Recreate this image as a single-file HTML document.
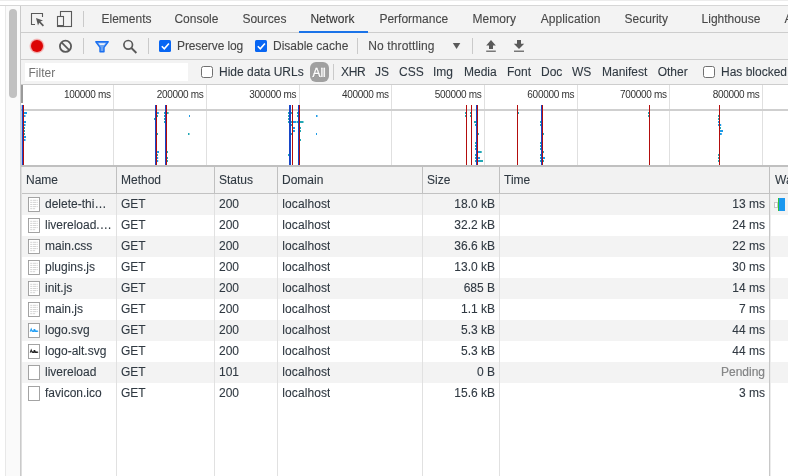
<!DOCTYPE html>
<html><head><meta charset="utf-8">
<style>
*{box-sizing:border-box;margin:0;padding:0}
html,body{width:788px;height:476px;overflow:hidden;background:#fff}
body{font-family:"Liberation Sans",sans-serif;font-size:12px;color:#303942;position:relative}
.abs{position:absolute}
.t{position:absolute;white-space:nowrap;line-height:14px;height:14px}
#topline{left:0;top:0;width:788px;height:1px;background:#ececec}
#topborder{left:0;top:5px;width:788px;height:1px;background:#d6d6d6}
#gutter{left:5px;top:6px;width:15px;height:470px;background:#fafafa;border-left:1px solid #e8e8e8}
#thumb{left:9px;top:9px;width:8px;height:89px;border-radius:4px;background:#c1c1c1}
#gline{left:20px;top:6px;width:1px;height:470px;background:#cacaca}
#tabbar{left:21px;top:6px;width:767px;height:27px;background:#f3f3f3;border-bottom:1px solid #cdcdcd}
#toolbar{left:21px;top:33px;width:767px;height:27px;background:#f3f3f3;border-bottom:1px solid #cdcdcd}
#filterbar{left:21px;top:60px;width:767px;height:25px;background:#f3f3f3;border-bottom:1px solid #cdcdcd}
.tab{top:12px;color:#474747;-webkit-text-stroke:0.1px #474747}
.sep{position:absolute;width:1px;background:#cacaca}
.tb{top:39px;color:#474747;-webkit-text-stroke:0.1px #474747}
.fb{top:65px;color:#303942;-webkit-text-stroke:0.1px #303942}
.cb{position:absolute;width:12px;height:12px;border-radius:1.5px}
.cb.on{background:#0866f3}
.cb.off{background:#fff;border:1px solid #707070;border-radius:2.5px}
#ov{left:21px;top:85px;width:767px;height:82px;background:#fff}
.gl{position:absolute;top:85px;width:1px;height:81px;background:#e0e0e0}
.tl{position:absolute;top:89px;font-size:10px;letter-spacing:-0.3px;line-height:12px;color:#333;text-align:right;width:80px;white-space:nowrap}
#ovh{left:21px;top:109px;width:767px;height:2px;background:#cfcfcf}
#ovb{left:21px;top:165px;width:767px;height:2px;background:#c0c0c0}
#thead{left:21px;top:167px;width:767px;height:27px;background:#f2f2f2;border-bottom:1px solid #c2c2c2}
.th{position:absolute;top:173px;line-height:14px;color:#303942;white-space:nowrap;-webkit-text-stroke:0.1px #303942}
.row{position:absolute;left:21px;width:767px;height:21px}
.row.odd{background:#f3f3f3}
.c{position:absolute;top:0;line-height:21px;height:21px;white-space:nowrap;color:#303942;overflow:hidden;-webkit-text-stroke:0.1px #303942}
.c.name{left:24px;width:67px;text-overflow:ellipsis}
.c.method{left:100px}
.c.status{left:198px}
.c.domain{left:261.3px;letter-spacing:0.08px}
.c.size{left:402px;width:72px;text-align:right}
.c.time{left:480px;width:264px;text-align:right}
.vl{position:absolute;width:1px}
.vl.h{top:167px;height:26px;background:#c0c0c0}
.vl.b{top:194px;height:282px;background:#e1e1e1}
.ic{position:absolute;left:7px;top:3px;width:12px;height:15px}
#wrap{position:absolute;left:0;top:0;width:788px;height:476px;will-change:transform}
</style></head><body><div id="wrap">
<div class="abs" id="topline"></div>
<div class="abs" id="topborder"></div>
<div class="abs" id="gutter"></div>
<div class="abs" id="thumb"></div>
<div class="abs" id="gline"></div>

<div class="abs" id="tabbar"></div>
<div class="abs" id="toolbar"></div>
<div class="abs" id="filterbar"></div>

<!-- tab bar -->
<div class="sep" style="left:83px;top:11px;height:16px"></div>
<div class="t tab" style="left:101.5px">Elements</div>
<div class="t tab" style="left:174.4px">Console</div>
<div class="t tab" style="left:242.4px">Sources</div>
<div class="t tab" style="left:310.4px;color:#333">Network</div>
<div class="abs" style="left:299px;top:31px;width:69px;height:2px;background:#1a73e8"></div>
<div class="t tab" style="left:379.4px">Performance</div>
<div class="t tab" style="left:472.6px">Memory</div>
<div class="t tab" style="left:540.7px;letter-spacing:0.1px">Application</div>
<div class="t tab" style="left:624.6px">Security</div>
<div class="t tab" style="left:701.6px">Lighthouse</div>
<div class="t tab" style="left:784.6px">A</div>

<!-- toolbar -->
<div class="sep" style="left:83px;top:38px;height:16px"></div>
<div class="sep" style="left:148px;top:38px;height:16px"></div>
<div class="cb on" style="left:159px;top:40px"></div>
<div class="t tb" style="left:177px;letter-spacing:-0.1px">Preserve log</div>
<div class="cb on" style="left:255px;top:40px"></div>
<div class="t tb" style="left:273px">Disable cache</div>
<div class="sep" style="left:357px;top:38px;height:16px"></div>
<div class="t tb" style="left:368.2px;letter-spacing:0.13px">No throttling</div>
<div class="sep" style="left:472px;top:38px;height:16px"></div>

<!-- filter bar -->
<div class="abs" style="left:25px;top:63px;width:163px;height:18px;background:#fff"></div>
<div class="t" style="top:66px;left:28.5px;color:#737373">Filter</div>
<div class="cb off" style="left:201px;top:66px"></div>
<div class="t fb" style="left:219px">Hide data URLs</div>
<div class="abs" style="left:310px;top:62px;width:19px;height:20px;border-radius:6px;background:#a0a0a0"></div>
<div class="t fb" style="left:312.4px;top:65.6px;color:#fff;-webkit-text-stroke:0.35px #fff;text-shadow:0 1px 0 rgba(0,0,0,0.35)">All</div>
<div class="sep" style="left:333px;top:64px;height:16px"></div>
<div class="t fb" style="left:341px;letter-spacing:-0.3px">XHR</div>
<div class="t fb" style="left:375px">JS</div>
<div class="t fb" style="left:399px">CSS</div>
<div class="t fb" style="left:433px">Img</div>
<div class="t fb" style="left:464px">Media</div>
<div class="t fb" style="left:507px">Font</div>
<div class="t fb" style="left:541px">Doc</div>
<div class="t fb" style="left:572px">WS</div>
<div class="t fb" style="left:602px">Manifest</div>
<div class="t fb" style="left:657.7px">Other</div>
<div class="cb off" style="left:703px;top:66px"></div>
<div class="t fb" style="left:721px">Has blocked cookies</div>

<!--ICONS-->
<svg class="abs" style="left:0;top:0" width="788" height="85" viewBox="0 0 788 85">
<!-- inspect -->
<path d="M35 24.5h-3.5v-11h11v3.5" fill="none" stroke="#5a5a5a" stroke-width="1.1"/>
<path d="M36 18l7 2.4-2.6 1.2 3.6 3.6-1.2 1.2-3.6-3.6-1.2 2.6z" fill="#5a5a5a"/>
<!-- device -->
<rect x="60.5" y="11.5" width="11" height="15" fill="none" stroke="#5a5a5a" stroke-width="1.1"/>
<rect x="57.5" y="16.5" width="6" height="10" fill="#f3f3f3" stroke="#5a5a5a" stroke-width="1.1"/>
<path d="M57.5 25.7h6" stroke="#5a5a5a" stroke-width="1.4"/>
<!-- record -->
<circle cx="37" cy="46" r="7.6" fill="#f3a0a0" opacity="0.55"/>
<circle cx="37" cy="46" r="6.8" fill="#f08080" opacity="0.6"/>
<circle cx="37" cy="46" r="6" fill="#dc0505"/>
<!-- clear -->
<circle cx="65.5" cy="46.3" r="5.6" fill="none" stroke="#5a5a5a" stroke-width="1.8"/>
<path d="M61.5 42.3l8 8" stroke="#5a5a5a" stroke-width="1.8"/>
<!-- filter -->
<path d="M95.8 41.8h12.4l-4.2 5.6v4.4h-4v-4.4z" fill="#6ea5f2" stroke="#1a6ff0" stroke-width="1.4" stroke-linejoin="round"/>
<path d="M98.5 43.2h7l-1.3 1.7h-4.4z" fill="#e9f0fb"/>
<!-- search -->
<circle cx="128.2" cy="44.8" r="4.3" fill="none" stroke="#5a5a5a" stroke-width="1.7"/>
<path d="M131.4 48l5 5" stroke="#5a5a5a" stroke-width="1.8"/>
<!-- checkmarks -->
<path d="M161.8 46.3l2.5 2.5 4.6-5.4" fill="none" stroke="#fff" stroke-width="1.6"/>
<path d="M257.8 46.3l2.5 2.5 4.6-5.4" fill="none" stroke="#fff" stroke-width="1.6"/>
<!-- dropdown arrow -->
<path d="M452.8 43h7.5l-3.75 6z" fill="#5a5a5a"/>
<!-- upload -->
<path d="M491 40l4.8 5.6h-2.8v3.4h-4v-3.4h-2.8z" fill="#5a5a5a"/>
<rect x="486.2" y="50.6" width="9.6" height="1.2" fill="#5a5a5a"/>
<!-- download -->
<path d="M517 40h4v3.8h3.2l-5.2 5.2-5.2-5.2h3.2z" fill="#5a5a5a"/>
<rect x="514" y="50.6" width="10" height="1.2" fill="#5a5a5a"/>
</svg>
<!--/ICONS-->
<!-- overview -->
<div class="abs" id="ov"></div>
<div class="gl" style="left:113.20px"></div>
<div class="tl" style="left:30.80px">100000 ms</div>
<div class="gl" style="left:205.87px"></div>
<div class="tl" style="left:123.47px">200000 ms</div>
<div class="gl" style="left:298.54px"></div>
<div class="tl" style="left:216.14px">300000 ms</div>
<div class="gl" style="left:391.21px"></div>
<div class="tl" style="left:308.81px">400000 ms</div>
<div class="gl" style="left:483.88px"></div>
<div class="tl" style="left:401.48px">500000 ms</div>
<div class="gl" style="left:576.55px"></div>
<div class="tl" style="left:494.15px">600000 ms</div>
<div class="gl" style="left:669.22px"></div>
<div class="tl" style="left:586.82px">700000 ms</div>
<div class="gl" style="left:761.89px"></div>
<div class="tl" style="left:679.49px">800000 ms</div>
<div class="abs" id="ovh"></div>
<!--OVERVIEW-MARKS-->
<svg class="abs" style="left:0;top:85px" width="788" height="82" viewBox="0 85 788 82" shape-rendering="auto">
<rect x="21" y="85" width="2" height="18" fill="#9a9a9a"/>
<rect x="24" y="112" width="3" height="2" fill="#1e9be6"/>
<rect x="24" y="115" width="1.5" height="2" fill="#1e9be6"/>
<rect x="24" y="121" width="2" height="2" fill="#1e9be6"/>
<rect x="24" y="124" width="1.5" height="2" fill="#1e9be6"/>
<rect x="24" y="127" width="1" height="2" fill="#22a7b4"/>
<rect x="24" y="130" width="1" height="2" fill="#22a7b4"/>
<rect x="24" y="133" width="1" height="2" fill="#22a7b4"/>
<rect x="24" y="136" width="2" height="2" fill="#1e9be6"/>
<rect x="24" y="139" width="1.5" height="2" fill="#1e9be6"/>
<rect x="157" y="112" width="1.8" height="2" fill="#1e9be6"/>
<rect x="157" y="115" width="1" height="2" fill="#22a7b4"/>
<rect x="154" y="118" width="1" height="2" fill="#22a7b4"/>
<rect x="157" y="133" width="1" height="2" fill="#22a7b4"/>
<rect x="157" y="151" width="2" height="2" fill="#1e9be6"/>
<rect x="157" y="154" width="1" height="2" fill="#22a7b4"/>
<rect x="157" y="157" width="1.2" height="2" fill="#1e9be6"/>
<rect x="157" y="160" width="1.2" height="2" fill="#1e9be6"/>
<rect x="164" y="112" width="1.2" height="2" fill="#22a7b4"/>
<rect x="167" y="112" width="1.6" height="2" fill="#22a7b4"/>
<rect x="164" y="115" width="1.2" height="2" fill="#22a7b4"/>
<rect x="164" y="118" width="1.2" height="2" fill="#22a7b4"/>
<rect x="164" y="121" width="1" height="2" fill="#22a7b4"/>
<rect x="167" y="151" width="1" height="2" fill="#22a7b4"/>
<rect x="167" y="157" width="1" height="2" fill="#22a7b4"/>
<rect x="167" y="160" width="1" height="2" fill="#22a7b4"/>
<rect x="189" y="115" width="1" height="2" fill="#1e9be6"/>
<rect x="188" y="133" width="1.5" height="2" fill="#22a7b4"/>
<rect x="288" y="112" width="1.2" height="2" fill="#22a7b4"/>
<rect x="288" y="115" width="1.2" height="2" fill="#22a7b4"/>
<rect x="288" y="118" width="1.2" height="2" fill="#22a7b4"/>
<rect x="288" y="154" width="1" height="2" fill="#22a7b4"/>
<rect x="291" y="112" width="1" height="2" fill="#22a7b4"/>
<rect x="288" y="121" width="8.5" height="2" fill="#22a7b4"/>
<rect x="293" y="121" width="3" height="2" fill="#1e9be6"/>
<rect x="291" y="124" width="1" height="2" fill="#22a7b4"/>
<rect x="293" y="127" width="2" height="2" fill="#1e9be6"/>
<rect x="293" y="130" width="2" height="2" fill="#1e9be6"/>
<rect x="291" y="133" width="1" height="2" fill="#22a7b4"/>
<rect x="297" y="112" width="1.2" height="2" fill="#22a7b4"/>
<rect x="297" y="115" width="1.2" height="2" fill="#22a7b4"/>
<rect x="297" y="121" width="6.5" height="2" fill="#22a7b4"/>
<rect x="300" y="127" width="1" height="2" fill="#22a7b4"/>
<rect x="300" y="130" width="1" height="2" fill="#22a7b4"/>
<rect x="300" y="139" width="1" height="2" fill="#22a7b4"/>
<rect x="316" y="115" width="1.5" height="2" fill="#1e9be6"/>
<rect x="316" y="133" width="1" height="2" fill="#1e9be6"/>
<rect x="465" y="112" width="1.2" height="2" fill="#22a7b4"/>
<rect x="465" y="115" width="1.2" height="2" fill="#22a7b4"/>
<rect x="470" y="112" width="1.2" height="2" fill="#22a7b4"/>
<rect x="470" y="115" width="1.2" height="2" fill="#22a7b4"/>
<rect x="474" y="121" width="2" height="2" fill="#22a7b4"/>
<rect x="475" y="124" width="1" height="2" fill="#22a7b4"/>
<rect x="478" y="133" width="1" height="2" fill="#22a7b4"/>
<rect x="475" y="142" width="1" height="2" fill="#22a7b4"/>
<rect x="475" y="145" width="1" height="2" fill="#22a7b4"/>
<rect x="475" y="148" width="1" height="2" fill="#22a7b4"/>
<rect x="478" y="151" width="3.7" height="2" fill="#22a7b4"/>
<rect x="478" y="151" width="1.5" height="2" fill="#1e9be6"/>
<rect x="475" y="154" width="1" height="2" fill="#22a7b4"/>
<rect x="478" y="157" width="2" height="2" fill="#1e9be6"/>
<rect x="475" y="157" width="1" height="2" fill="#22a7b4"/>
<rect x="475" y="160" width="8" height="2" fill="#22a7b4"/>
<rect x="478" y="160" width="2" height="2" fill="#1e9be6"/>
<rect x="518" y="112" width="1" height="2" fill="#22a7b4"/>
<rect x="540" y="121" width="1.2" height="2" fill="#22a7b4"/>
<rect x="540" y="124" width="1.2" height="2" fill="#22a7b4"/>
<rect x="543" y="133" width="1" height="2" fill="#22a7b4"/>
<rect x="540" y="142" width="1.2" height="2" fill="#22a7b4"/>
<rect x="540" y="145" width="1.2" height="2" fill="#22a7b4"/>
<rect x="540" y="148" width="1.2" height="2" fill="#22a7b4"/>
<rect x="543" y="151" width="1" height="2" fill="#22a7b4"/>
<rect x="540" y="154" width="1.2" height="2" fill="#22a7b4"/>
<rect x="543" y="157" width="2" height="2" fill="#1e9be6"/>
<rect x="540" y="157" width="1.2" height="2" fill="#22a7b4"/>
<rect x="540" y="160" width="1.2" height="2" fill="#22a7b4"/>
<rect x="543" y="160" width="1" height="2" fill="#22a7b4"/>
<rect x="648" y="112" width="1.2" height="2" fill="#22a7b4"/>
<rect x="648" y="115" width="1.2" height="2" fill="#22a7b4"/>
<rect x="718" y="115" width="1.2" height="2" fill="#22a7b4"/>
<rect x="718" y="118" width="1.2" height="2" fill="#22a7b4"/>
<rect x="718" y="121" width="1.2" height="2" fill="#1e9be6"/>
<rect x="718" y="124" width="1.2" height="2" fill="#1e9be6"/>
<rect x="720" y="124" width="1.2" height="2" fill="#1e9be6"/>
<rect x="720" y="127" width="1" height="2" fill="#22a7b4"/>
<rect x="720" y="130" width="3" height="2" fill="#1e9be6"/>
<rect x="720" y="133" width="1.8" height="2" fill="#1e9be6"/>
<rect x="718" y="154" width="1.2" height="2" fill="#22a7b4"/>
<rect x="718" y="157" width="1.2" height="2" fill="#22a7b4"/>
<rect x="718" y="160" width="1.2" height="2" fill="#22a7b4"/>
<rect x="21.7" y="105" width="1.3" height="60" fill="#1746c8"/>
<rect x="23" y="105" width="1" height="60" fill="#b30d0d"/>
<rect x="155" y="105" width="1" height="60" fill="#1746c8"/>
<rect x="156" y="105" width="1" height="60" fill="#b30d0d"/>
<rect x="165" y="105" width="1" height="60" fill="#1746c8"/>
<rect x="166" y="105" width="1" height="60" fill="#b30d0d"/>
<rect x="289" y="105" width="2" height="60" fill="#1746c8"/>
<rect x="292" y="105" width="1" height="60" fill="#b30d0d"/>
<rect x="298" y="105" width="1" height="60" fill="#1746c8"/>
<rect x="299" y="105" width="1" height="60" fill="#b30d0d"/>
<rect x="466" y="105" width="1" height="60" fill="#b30d0d"/>
<rect x="471" y="105" width="1" height="60" fill="#b30d0d"/>
<rect x="476" y="105" width="1" height="60" fill="#1746c8"/>
<rect x="477" y="105" width="1" height="60" fill="#b30d0d"/>
<rect x="517" y="105" width="1" height="60" fill="#b30d0d"/>
<rect x="541" y="105" width="1" height="60" fill="#1746c8"/>
<rect x="542" y="105" width="1" height="60" fill="#b30d0d"/>
<rect x="649" y="105" width="1" height="60" fill="#b30d0d"/>
<rect x="719" y="105" width="1" height="60" fill="#b30d0d"/>
</svg>
<!--/OVERVIEW-MARKS-->
<div class="abs" id="ovb"></div>

<!-- table -->
<div class="abs" id="gline2" style="left:21px;top:167px;width:1px;height:309px;background:#dedede;z-index:3"></div>
<div class="abs" id="thead"></div>
<!--ROWS-->
<div class="row odd" style="top:194px"><svg class="ic" viewBox="0 0 12 15"><rect x="0.5" y="0.5" width="11" height="14" fill="#fff" stroke="#9a9a9a" stroke-width="0.9"/><path d="M2.2 3.3h7.6M2.2 5.4h7.6M2.2 7.5h7.6M2.2 9.6h7.6M2.2 11.7h5" stroke="#cfcfcf" stroke-width="0.9" stroke-dasharray="2.2 0.6 3 0.5"/></svg><div class="c name">delete-this.css</div><div class="c method">GET</div><div class="c status">200</div><div class="c domain">localhost</div><div class="c size">18.0 kB</div><div class="c time">13 ms</div></div>
<div class="row" style="top:215px"><svg class="ic" viewBox="0 0 12 15"><rect x="0.5" y="0.5" width="11" height="14" fill="#fff" stroke="#9a9a9a" stroke-width="0.9"/><path d="M2.2 3.3h7.6M2.2 5.4h7.6M2.2 7.5h7.6M2.2 9.6h7.6M2.2 11.7h5" stroke="#cfcfcf" stroke-width="0.9" stroke-dasharray="2.2 0.6 3 0.5"/></svg><div class="c name">livereload.js?snipver=1</div><div class="c method">GET</div><div class="c status">200</div><div class="c domain">localhost</div><div class="c size">32.2 kB</div><div class="c time">24 ms</div></div>
<div class="row odd" style="top:236px"><svg class="ic" viewBox="0 0 12 15"><rect x="0.5" y="0.5" width="11" height="14" fill="#fff" stroke="#9a9a9a" stroke-width="0.9"/><path d="M2.2 3.3h7.6M2.2 5.4h7.6M2.2 7.5h7.6M2.2 9.6h7.6M2.2 11.7h5" stroke="#cfcfcf" stroke-width="0.9" stroke-dasharray="2.2 0.6 3 0.5"/></svg><div class="c name">main.css</div><div class="c method">GET</div><div class="c status">200</div><div class="c domain">localhost</div><div class="c size">36.6 kB</div><div class="c time">22 ms</div></div>
<div class="row" style="top:257px"><svg class="ic" viewBox="0 0 12 15"><rect x="0.5" y="0.5" width="11" height="14" fill="#fff" stroke="#9a9a9a" stroke-width="0.9"/><path d="M2.2 3.3h7.6M2.2 5.4h7.6M2.2 7.5h7.6M2.2 9.6h7.6M2.2 11.7h5" stroke="#cfcfcf" stroke-width="0.9" stroke-dasharray="2.2 0.6 3 0.5"/></svg><div class="c name">plugins.js</div><div class="c method">GET</div><div class="c status">200</div><div class="c domain">localhost</div><div class="c size">13.0 kB</div><div class="c time">30 ms</div></div>
<div class="row odd" style="top:278px"><svg class="ic" viewBox="0 0 12 15"><rect x="0.5" y="0.5" width="11" height="14" fill="#fff" stroke="#9a9a9a" stroke-width="0.9"/><path d="M2.2 3.3h7.6M2.2 5.4h7.6M2.2 7.5h7.6M2.2 9.6h7.6M2.2 11.7h5" stroke="#cfcfcf" stroke-width="0.9" stroke-dasharray="2.2 0.6 3 0.5"/></svg><div class="c name">init.js</div><div class="c method">GET</div><div class="c status">200</div><div class="c domain">localhost</div><div class="c size">685 B</div><div class="c time">14 ms</div></div>
<div class="row" style="top:299px"><svg class="ic" viewBox="0 0 12 15"><rect x="0.5" y="0.5" width="11" height="14" fill="#fff" stroke="#9a9a9a" stroke-width="0.9"/><path d="M2.2 3.3h7.6M2.2 5.4h7.6M2.2 7.5h7.6M2.2 9.6h7.6M2.2 11.7h5" stroke="#cfcfcf" stroke-width="0.9" stroke-dasharray="2.2 0.6 3 0.5"/></svg><div class="c name">main.js</div><div class="c method">GET</div><div class="c status">200</div><div class="c domain">localhost</div><div class="c size">1.1 kB</div><div class="c time">7 ms</div></div>
<div class="row odd" style="top:320px"><svg class="ic" viewBox="0 0 12 15"><rect x="0.5" y="0.5" width="11" height="14" fill="#fff" stroke="#9a9a9a" stroke-width="0.9"/><path d="M2.2 8.6l1-2.6 1 2.6M4.9 7.2v1.3h1.2v-2.6M6.8 6v2.5M7.6 7.2v1.3h1.3v-1.3M9.4 8.2h0.8" stroke="#1e9df5" stroke-width="1.05" fill="none"/></svg><div class="c name">logo.svg</div><div class="c method">GET</div><div class="c status">200</div><div class="c domain">localhost</div><div class="c size">5.3 kB</div><div class="c time">44 ms</div></div>
<div class="row" style="top:341px"><svg class="ic" viewBox="0 0 12 15"><rect x="0.5" y="0.5" width="11" height="14" fill="#fff" stroke="#9a9a9a" stroke-width="0.9"/><path d="M2.2 8.6l1-2.6 1 2.6M4.9 7.2v1.3h1.2v-2.6M6.8 6v2.5M7.6 7.2v1.3h1.3v-1.3M9.4 8.2h0.8" stroke="#222" stroke-width="1.05" fill="none"/></svg><div class="c name">logo-alt.svg</div><div class="c method">GET</div><div class="c status">200</div><div class="c domain">localhost</div><div class="c size">5.3 kB</div><div class="c time">44 ms</div></div>
<div class="row odd" style="top:362px"><svg class="ic" viewBox="0 0 12 15"><rect x="0.5" y="0.5" width="11" height="14" fill="#fff" stroke="#9a9a9a" stroke-width="0.9"/></svg><div class="c name">livereload</div><div class="c method">GET</div><div class="c status">101</div><div class="c domain">localhost</div><div class="c size">0 B</div><div class="c time" style="color:#8a8a8a">Pending</div></div>
<div class="row" style="top:383px"><svg class="ic" viewBox="0 0 12 15"><rect x="0.5" y="0.5" width="11" height="14" fill="#fff" stroke="#9a9a9a" stroke-width="0.9"/></svg><div class="c name">favicon.ico</div><div class="c method">GET</div><div class="c status">200</div><div class="c domain">localhost</div><div class="c size">15.6 kB</div><div class="c time">3 ms</div></div>
<!--/ROWS-->
<!--WF-->
<div class="abs" style="left:774px;top:202px;width:4px;height:6px;background:#fff;border:1px solid #c8c8c8"></div>
<div class="abs" style="left:777.6px;top:198px;width:1px;height:13px;background:#2fc43a"></div>
<div class="abs" style="left:778.5px;top:198px;width:6.6px;height:13px;background:#1b98ef"></div>
<!--/WF-->
<div class="vl h" style="left:116px"></div><div class="vl b" style="left:116px"></div>
<div class="vl h" style="left:214px"></div><div class="vl b" style="left:214px"></div>
<div class="vl h" style="left:277px"></div><div class="vl b" style="left:277px"></div>
<div class="vl h" style="left:422px"></div><div class="vl b" style="left:422px"></div>
<div class="vl h" style="left:499px"></div><div class="vl b" style="left:499px"></div>
<div class="vl h" style="left:769px"></div><div class="vl b" style="left:769px;background:#c8c8c8"></div><div class="vl b" style="left:770px;background:#ececec"></div>
<div class="th" style="left:26px">Name</div>
<div class="th" style="left:121px">Method</div>
<div class="th" style="left:219px">Status</div>
<div class="th" style="left:282px">Domain</div>
<div class="th" style="left:427px">Size</div>
<div class="th" style="left:504px">Time</div>
<div class="th" style="left:775px">Waterfall</div>
</div></body></html>
